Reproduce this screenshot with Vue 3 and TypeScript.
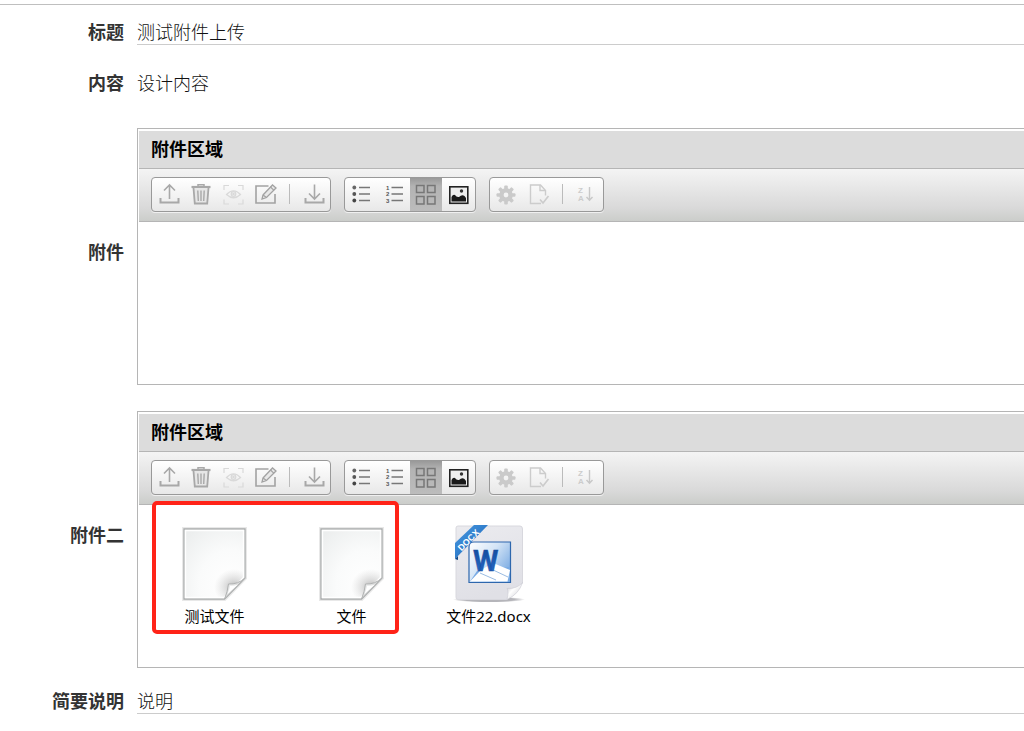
<script setup lang="ts">
import { ref } from 'vue'

interface FileItem {
  name: string
  kind: 'blank' | 'docx'
  marked: boolean
}

interface Panel {
  id: string
  label: string
  files: FileItem[]
}

interface Tool {
  icon: string
  title: string
}

const title = ref<string>('测试附件上传')
const summary = ref<string>('说明')

const panels: Panel[] = [
  { id: 'first', label: '附件', files: [] },
  {
    id: 'second',
    label: '附件二',
    files: [
      { name: '测试文件', kind: 'blank', marked: true },
      { name: '文件', kind: 'blank', marked: true },
      { name: '文件22.docx', kind: 'docx', marked: false },
    ],
  },
]

const toolGroups: Tool[][] = [
  [
    { icon: 'upload', title: '上传' },
    { icon: 'trash', title: '删除' },
    { icon: 'view', title: '查看' },
    { icon: 'edit', title: '编辑' },
    { icon: 'sep', title: '' },
    { icon: 'download', title: '下载' },
  ],
  [
    { icon: 'list', title: '列表' },
    { icon: 'ordered', title: '编号列表' },
    { icon: 'grid', title: '图标' },
    { icon: 'image', title: '图片' },
  ],
  [
    { icon: 'gear', title: '设置' },
    { icon: 'doc', title: '文档' },
    { icon: 'sep', title: '' },
    { icon: 'sort', title: '排序' },
  ],
]

const teeth: number[] = [0, 45, 90, 135, 180, 225, 270, 315]
</script>

<template>
  <main class="form">
    <div class="row row-title">
      <label class="label" for="title">标题</label>
      <input id="title" v-model="title" class="field" type="text" readonly />
    </div>

    <div class="row row-body">
      <span class="label">内容</span>
      <p class="text">设计内容</p>
    </div>

    <div v-for="p in panels" :key="p.id" class="row row-panel">
      <span :id="p.id" class="label">{{ p.label }}</span>
      <section class="panel" :aria-labelledby="p.id">
        <h2 class="panel-title">附件区域</h2>
        <div class="toolbar">
          <div v-for="(group, g) in toolGroups" :key="g" class="group" :class="{ padded: g < 2 }">
            <template v-for="(t, i) in group" :key="i">
              <span v-if="t.icon === 'sep'" class="sep"></span>
              <button v-else type="button" class="tool" :class="{ active: t.icon === 'grid' }" :aria-label="t.title">
                <svg width="24" height="24" viewBox="0 0 24 24" fill="none">
                  <g v-if="t.icon === 'upload'" stroke="#a8a8a8" stroke-width="1.6">
                    <path d="M12.500 16V2M7 7.500L12.500 2 18 7.500" />
                    <path d="M3.500 15V19.500H21.500V15" stroke-width="2" />
                  </g>
                  <g v-else-if="t.icon === 'download'" stroke="#a8a8a8" stroke-width="1.600">
                    <path d="M12.500 1.500V16M7 10.500L12.500 16 18 10.500" />
                    <path d="M3.500 15V19.500H21.500V15" stroke-width="2" />
                  </g>
                  <g v-else-if="t.icon === 'trash'" stroke="#a8a8a8">
                    <path d="M2.500 4H21.500" stroke-width="2.200" />
                    <path d="M9 3.500V1.800H15V3.500" stroke-width="1.500" />
                    <path d="M4.500 5L5.800 20.500H18.200L19.500 5" fill="#e6e6e6" stroke-width="1.800" />
                    <path d="M8.800 7.500L9.300 18M12 7.500V18M15.200 7.500L14.700 18" stroke-width="1.400" />
                  </g>
                  <g v-else-if="t.icon === 'view'" stroke="#d9d9d9" stroke-width="1.200">
                    <path d="M3 7V2.500H8M17 2.500H22V7M22 16.500V21H17M8 21H3V16.500" />
                    <path d="M5.500 11.500Q12.500 4 19.500 11.500Q12.500 18 5.500 11.500Z" />
                    <circle cx="12.500" cy="11" r="2.300" />
                    <circle cx="12.500" cy="11" r="0.700" fill="#d9d9d9" />
                  </g>
                  <g v-else-if="t.icon === 'edit'" stroke="#a2a2a2">
                    <path d="M15.500 3H3V20H22V11" stroke-width="1.600" />
                    <path d="M10 12L19.500 2L23 5L13.500 14.500L9 16Z" fill="#e8e8e8" stroke-width="1.300" />
                    <path d="M17.500 4L21 7.300M10 12L13.500 14.500" stroke-width="1.100" />
                  </g>
                  <g v-else-if="t.icon === 'list'">
                    <path d="M9 4.500H20M9 11H20M9 17.500H20" stroke="#777" stroke-width="1.500" />
                    <circle cx="4.300" cy="4.500" r="1.900" fill="#666" />
                    <circle cx="4.300" cy="11" r="1.900" fill="#555" />
                    <circle cx="4.300" cy="17.500" r="1.900" fill="#444" />
                  </g>
                  <g v-else-if="t.icon === 'ordered'">
                    <path d="M9.500 4.500H21M9.500 11H21M9.500 17.500H21" stroke="#777" stroke-width="1.500" />
                    <g class="digits" fill="#555">
                      <text x="4" y="6.500">1</text>
                      <text x="4" y="13">2</text>
                      <text x="4" y="19.500">3</text>
                    </g>
                  </g>
                  <g v-else-if="t.icon === 'grid'" stroke="#777" stroke-width="1.500">
                    <path d="M2.500 2.500H10V9.500H2.500ZM13.500 2.500H21V9.500H13.500ZM2.500 13.500H10V21H2.500ZM13.500 13.500H21V21H13.500Z" />
                  </g>
                  <g v-else-if="t.icon === 'image'">
                    <rect x="3.800" y="3.800" width="18" height="16.500" fill="#eee" stroke="#222" stroke-width="1.600" />
                    <path d="M5.500 18.500V14Q7 11 9 12Q10.500 14.500 13 14Q16 11 18.500 13L20 15V18.500Z" fill="#1a1a1a" />
                    <circle cx="15.500" cy="8" r="1.700" fill="#333" />
                  </g>
                  <g v-else-if="t.icon === 'gear'">
                    <rect v-for="a in teeth" :key="a" x="10.200" y="2.500" width="3.600" height="5" rx="1" fill="#cacaca" :transform="`rotate(${a} 12 12)`" />
                    <circle cx="12" cy="12" r="4.600" stroke="#cacaca" stroke-width="4.400" />
                  </g>
                  <g v-else-if="t.icon === 'doc'" stroke="#ccc" stroke-width="1.400">
                    <path d="M19.500 12.500V7.500L14.500 2H4.500V20.500H15" />
                    <path d="M14 2V7.500H19" />
                    <path d="M14 16.500L17 20L22.500 13" stroke-width="1.700" />
                  </g>
                  <g v-else>
                    <g class="letters" fill="#ccc">
                      <text x="3" y="9.500">Z</text>
                      <text x="3" y="17.500">A</text>
                    </g>
                    <path d="M14.500 4V17M11.500 14L14.500 17.300L17.500 14" stroke="#c8c8c8" stroke-width="1.400" />
                  </g>
                </svg>
              </button>
            </template>
          </div>
        </div>
        <ul class="files">
          <li v-for="f in p.files" :key="f.name" class="file">
            <svg v-if="f.kind === 'blank'" width="72" height="80" viewBox="0 0 72 80" aria-hidden="true">
              <defs>
                <radialGradient :id="`paper-${f.name.length}`" cx="0.75" cy="0.8" r="1">
                  <stop offset="0" stop-color="#fff" />
                  <stop offset="0.500" stop-color="#fafbfb" />
                  <stop offset="1" stop-color="#eceeee" />
                </radialGradient>
                <radialGradient :id="`fold-${f.name.length}`" cx="0.500" cy="0.500" r="0.500">
                  <stop offset="0" stop-color="#aaa" stop-opacity="0.900" />
                  <stop offset="0.400" stop-color="#bbb" stop-opacity="0.500" />
                  <stop offset="1" stop-color="#ccc" stop-opacity="0" />
                </radialGradient>
                <linearGradient :id="`curl-${f.name.length}`" x1="0" y1="0" x2="1" y2="1">
                  <stop offset="0" stop-color="#fff" />
                  <stop offset="0.600" stop-color="#d2d3d3" />
                  <stop offset="1" stop-color="#f4f4f4" />
                </linearGradient>
                <clipPath :id="`page-${f.name.length}`"><path d="M5 6H66V55L45.500 76H5Z" /></clipPath>
              </defs>
              <path d="M5 6H66V55L45.500 76H5Z" fill="#fff" stroke="#e8e8e8" stroke-width="4" />
              <path d="M5 6H66V55L45.500 76H5Z" :fill="`url(#paper-${f.name.length})`" stroke="#a9acac" stroke-width="1.300" />
              <ellipse cx="55" cy="64" rx="20" ry="18" :fill="`url(#fold-${f.name.length})`" :clip-path="`url(#page-${f.name.length})`" />
              <path d="M6.500 7.500H64.500V54.500L45 74.500H6.500Z" fill="none" stroke="#fff" stroke-width="1.400" />
              <path d="M45.500 76Q48.500 69 49.500 61Q59 61.500 66 55Z" :fill="`url(#curl-${f.name.length})`" stroke="#b0b2b2" />
              <path d="M48.500 71Q50.500 66 51 62.800Q55 63 59 61.500Z" fill="#fff" />
            </svg>
            <svg v-else width="72" height="80" viewBox="0 0 72 80" aria-hidden="true">
              <defs>
                <linearGradient id="docx-page" x1="0" y1="0" x2="0.300" y2="1">
                  <stop offset="0" stop-color="#ebebef" />
                  <stop offset="1" stop-color="#e0e0e6" />
                </linearGradient>
                <linearGradient id="docx-tile" x1="0" y1="0" x2="1" y2="0.700">
                  <stop offset="0" stop-color="#fff" />
                  <stop offset="0.500" stop-color="#d3e4f6" />
                  <stop offset="1" stop-color="#79aae2" />
                </linearGradient>
                <linearGradient id="docx-band" x1="0" y1="0" x2="1" y2="1">
                  <stop offset="0" stop-color="#4a9ae0" />
                  <stop offset="1" stop-color="#1762b8" />
                </linearGradient>
                <linearGradient id="docx-word" x1="0" y1="0" x2="0" y2="1">
                  <stop offset="0" stop-color="#0f4797" />
                  <stop offset="1" stop-color="#2a70cf" />
                </linearGradient>
                <linearGradient id="docx-curl" x1="0" y1="0" x2="1" y2="1">
                  <stop offset="0" stop-color="#bbbbc2" />
                  <stop offset="0.400" stop-color="#fff" />
                  <stop offset="1" stop-color="#c5c5cc" />
                </linearGradient>
                <radialGradient id="docx-shadow">
                  <stop offset="0.700" stop-color="#b5b5ba" />
                  <stop offset="1" stop-color="#b5b5ba" stop-opacity="0" />
                </radialGradient>
              </defs>
              <ellipse cx="36" cy="76.500" rx="36" ry="3" fill="url(#docx-shadow)" />
              <path d="M5 3H67Q69.500 3 69.500 6V60L54 76.500H5Q3 76.500 3 74V5Q3 3 5 3Z" fill="url(#docx-page)" stroke="#d8d8de" />
              <path d="M54 76.500Q56 68 54 65.500Q64 66 69.500 59.500Q66 71 54 76.500Z" fill="url(#docx-curl)" stroke="#cacad1" stroke-width="0.600" />
              <path d="M16 24Q16 19 21 19H57.500V59.500H16Z" fill="url(#docx-tile)" stroke="#2e67ad" stroke-width="1.200" />
              <path d="M17 58.500L24 48L57 44V58.500Z" fill="#78aae4" />
              <path d="M17 58.500L28 47L40 40L57 47L54.500 58.500Z" fill="#fff" />
              <path d="M27 50L43 57M38 46L55 54" stroke="#9bbce2" />
              <text class="word" x="20" y="48" fill="url(#docx-word)" stroke="#174da0" stroke-width="0.500">W</text>
              <path d="M2 20L21 2H35L2 36Z" fill="url(#docx-band)" />
              <path d="M2 36L5 33V37Z" fill="#104887" />
              <text class="band" x="0" y="0" fill="#fff" transform="translate(8.500 28.500) rotate(-45)">DOCX</text>
            </svg>
            <span class="file-name">{{ f.name }}</span>
          </li>
          <li v-if="p.files.some((f) => f.marked)" class="marker" aria-hidden="true"></li>
        </ul>
      </section>
    </div>

    <div class="row row-summary">
      <label class="label" for="summary">简要说明</label>
      <input id="summary" v-model="summary" class="field" type="text" readonly />
    </div>
  </main>
</template>

<style>
body {
  margin: 0;
  background: #fff;
}
</style>

<style scoped>
.form {
  margin-top: 4px;
  border-top: 1px solid #bfbfbf;
  padding: 13px 0 17px;
  font-family: 'Noto Sans', 'Noto Sans CJK SC', sans-serif;
  font-size: 18px;
  line-height: 26px;
  color: #333;
  overflow: hidden;
}
.row {
  display: grid;
  grid-template-columns: 124px minmax(0, 1fr);
  column-gap: 13px;
  align-items: center;
}
.row-body {
  margin: 25px 0 22px;
}
.row-panel {
  margin-bottom: 16px;
}
.row-summary {
  margin-top: 19px;
}
.label {
  text-align: right;
  font-weight: 700;
}
.text {
  margin: 0;
  font-weight: 300;
  color: #111;
}
.field {
  box-sizing: border-box;
  width: 100%;
  height: 27px;
  padding: 0 0 1px;
  border: 0;
  border-bottom: 1px solid #ccc;
  border-radius: 0;
  outline: 0;
  background: none;
  font: inherit;
  font-weight: 300;
  color: #111;
}
.panel {
  margin-top: 10px;
  border: 1px solid #b5b5b5;
  border-right: 0;
}
.panel-title {
  margin: 2px 0 0 1px;
  padding: 5px 12px 6px;
  border-bottom: 1px solid #b5b5b5;
  background: #dcdcdc;
  font-size: 18px;
  line-height: 26px;
  font-weight: 700;
  color: #000;
}
.toolbar {
  display: flex;
  gap: 13px;
  margin-left: 1px;
  padding: 8px 12px 9px;
  border-bottom: 1px solid #b5b5b5;
  background: linear-gradient(#f4f4f4, #d9d9d9 75%, #cbcdca);
}
.group {
  display: flex;
  height: 33px;
  border: 1px solid #999;
  border-radius: 4px;
  background: linear-gradient(#fff, #e8e8e8);
  box-shadow: 0 1px 0 #f0f0f0;
}
.group.padded {
  padding-left: 1px;
}
.group.padded:nth-child(2) {
  padding-right: 1px;
}
.tool {
  display: flex;
  align-items: center;
  justify-content: center;
  width: 32px;
  height: 33px;
  padding: 0;
  border: 0;
  background: none;
}
.tool.active {
  background: linear-gradient(#999, #b3b3b3 25%, #bcbcbc);
}
.sep {
  width: 1px;
  height: 20px;
  margin: 6px 8px;
  background: #bbb;
}
.digits {
  font: 700 6px 'Liberation Sans', sans-serif;
}
.letters {
  font: 700 8px 'Liberation Sans', sans-serif;
}
.word {
  font: 700 29px Roboto, sans-serif;
}
.band {
  font: 700 9px 'Liberation Sans', sans-serif;
}
.files {
  position: relative;
  display: flex;
  min-height: 144px;
  margin: 0;
  padding: 18px 8px 0;
  list-style: none;
}
.file {
  display: flex;
  flex-direction: column;
  align-items: center;
  width: 137px;
}
.file-name {
  margin-top: 2px;
  font-size: 15px;
  line-height: 22px;
  color: #000;
}
.marker {
  position: absolute;
  top: -4px;
  left: 14px;
  width: 239px;
  height: 125px;
  border: 4px solid #ff2318;
  border-radius: 5px;
}
</style>
